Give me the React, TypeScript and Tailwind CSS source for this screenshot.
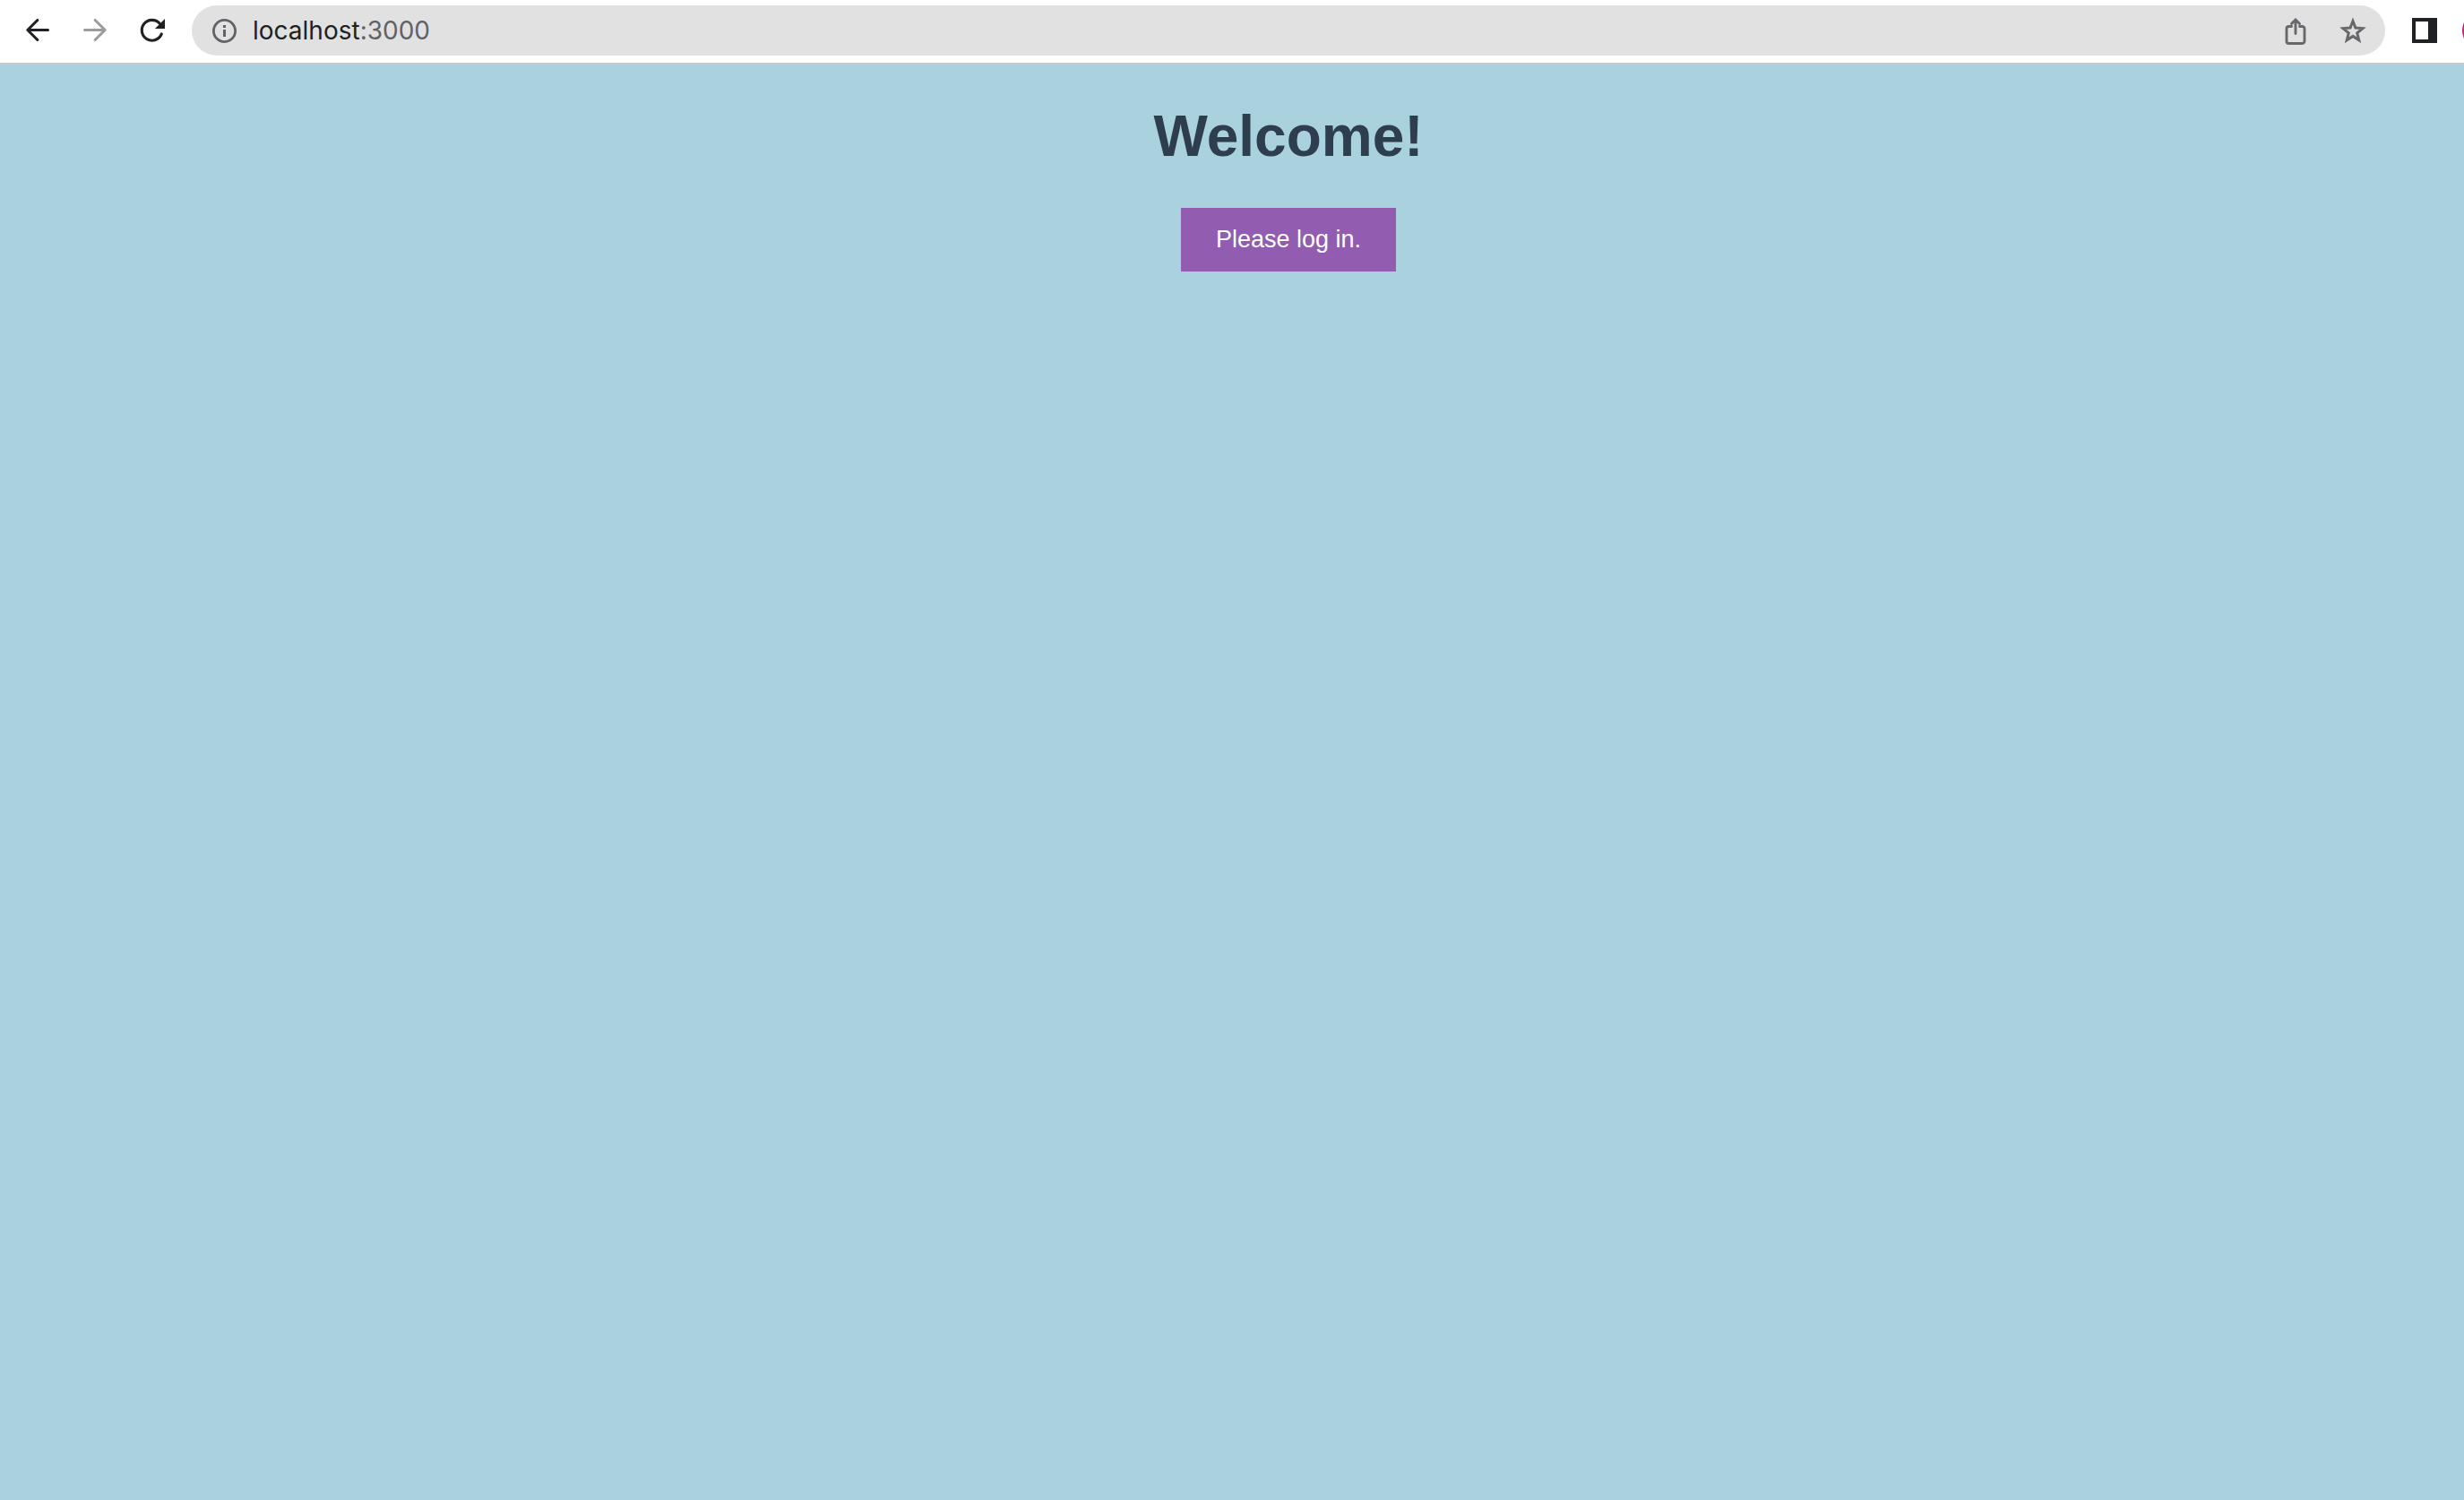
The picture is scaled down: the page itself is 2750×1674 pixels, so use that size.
import type { ReactNode } from "react";

function ToolButton({ label, children }: { label: string; children: ReactNode }) {
  return (
    <button type="button" aria-label={label} className="flex h-14 w-16 shrink-0 items-center justify-center">
      <svg viewBox="0 0 32 32" className="size-8" fill="none" aria-hidden="true">
        {children}
      </svg>
    </button>
  );
}

function Toolbar() {
  return (
    <header className="flex h-[72px] shrink-0 items-start overflow-hidden border-b-2 border-[#c9c9c9] bg-white pt-[6px] pl-[10px]">
      <ToolButton label="Back">
        <path d="M27.5 15.5H5M15.8 4.5L4.8 15.5l11 11" stroke="#202124" strokeWidth="3.1" strokeLinecap="round" strokeLinejoin="round" />
      </ToolButton>
      <ToolButton label="Forward">
        <path d="M4.5 15.5H27M16.2 4.500l11 11-11 11" stroke="#9b9c9e" strokeWidth="3.1" strokeLinecap="round" strokeLinejoin="round" />
      </ToolButton>
      <ToolButton label="Reload">
        <path d="M26.3 19.9A11.4 11.4 0 1 1 24.2 8.2" stroke="#202124" strokeWidth="3.1" strokeLinecap="round" />
        <path d="M30 3v11H19z" fill="#202124" />
      </ToolButton>

      <div className="ml-3 flex h-14 min-w-0 flex-1 items-center rounded-full bg-[#e1e1e1] pr-1 pl-[22px]">
        <button type="button" aria-label="View site information" className="shrink-0">
          <svg viewBox="0 0 28 28" className="size-7" fill="none" aria-hidden="true">
            <circle cx="14.5" cy="14.5" r="12.1" stroke="#5f6368" strokeWidth="2.8" />
            <path d="M13 13h3v8h-3zM13 8h3v3h-3z" fill="#5f6368" />
          </svg>
        </button>
        <div className="ml-[18px] min-w-0 flex-1 font-['Inter',sans-serif] text-[28px] leading-8 text-[#202124]">
          localhost<span className="text-[#5f6368]">:3000</span>
        </div>
        <ToolButton label="Share this page">
          <path
            d="M11.5 11.5H8.500a2.500 2.500 0 0 0-2.500 2.500v14a2.500 2.500 0 0 0 2.500 2.500h15a2.500 2.500 0 0 0 2.500-2.500V14a2.500 2.500 0 0 0-2.500-2.500H20.500M16 19.500V4.500M11.500 8.500L16 4l4.500 4.500"
            stroke="#66686b"
            strokeWidth="2.900"
            strokeLinecap="round"
          />
        </ToolButton>
        <ToolButton label="Bookmark this page">
          <path
            d="M16 5.500l2.900 7.500 8.100.6-6.300 5.200 2.100 8-6.800-4.400-6.800 4.400 2.100-8L5 13.600l8.100-.6z"
            stroke="#66686b"
            strokeWidth="3"
          />
        </ToolButton>
      </div>

      <div className="ml-3 flex w-[76px] shrink-0 items-center gap-[10px]">
        <ToolButton label="Show side panel">
          <path d="M2 2h28v28H2zM6 6v20h14V6z" fill="#202124" fillRule="evenodd" />
        </ToolButton>
        <button type="button" aria-label="Profile" className="size-[42px] shrink-0 rounded-full bg-[#c2246f]" />
      </div>
    </header>
  );
}

export default function App() {
  return (
    <div className="flex min-h-screen flex-col bg-[#a9d1de] font-['Liberation_Sans',Arial,sans-serif]">
      <Toolbar />
      <main className="flex flex-1 flex-col items-center pt-[43px] pl-[126px]">
        <h1 className="text-[64px] leading-[74px] font-bold text-[#2f3e4e]">Welcome!</h1>
        <button type="button" className="mt-[43px] bg-[#925cb1] px-[39px] py-5 text-[27px] leading-[31px] text-white">
          Please log in.
        </button>
      </main>
    </div>
  );
}
